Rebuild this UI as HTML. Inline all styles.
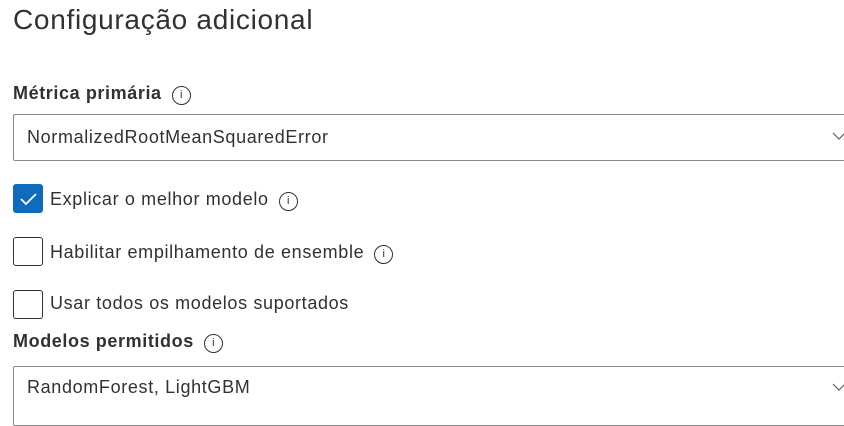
<!DOCTYPE html>
<html><head><style>
body{margin:0;width:844px;height:410px;background:#fff;font-family:"Liberation Sans",sans-serif;color:#323130;position:relative;overflow:hidden}
.a{position:absolute;white-space:nowrap}
.t{left:13px;top:4px;font-size:28px;letter-spacing:0.7px;color:#323130}
.l{font-size:18px;font-weight:bold;letter-spacing:0.6px;color:#323130}
.x{font-size:18px;letter-spacing:0.65px}
.box{position:absolute;left:13px;width:840px;height:47px;border:1px solid #8a8886;border-radius:2px;box-sizing:border-box}
.cb{position:absolute;left:13px;width:30px;height:29px;border:1px solid #323130;border-radius:3px;box-sizing:border-box}
.i{display:inline-block;width:19px;height:19px;border:1.2px solid #323130;border-radius:50%;box-sizing:border-box;font-size:11px;text-align:center;line-height:17px;font-weight:normal;letter-spacing:0;vertical-align:1px;margin-left:10px}
</style></head><body>
<div class="a t">Configuração adicional</div>
<div class="a l" style="left:13px;top:83px">Métrica primária<span class="i">i</span></div>
<div class="box" style="top:114px"></div>
<div class="a x" style="left:27px;top:127px">NormalizedRootMeanSquaredError</div>
<svg class="a" style="left:832px;top:131px" width="14" height="10"><path d="M1 2l6 6 6-6" fill="none" stroke="#605e5c" stroke-width="1.2"/></svg>
<div class="cb" style="top:184px;background:#0f6cbd;border-color:#0f6cbd"><svg width="28" height="27"><path d="M7 14l5 5 10-10" fill="none" stroke="#fff" stroke-width="1.8"/></svg></div>
<div class="a x" style="left:50px;top:189px">Explicar o melhor modelo<span class="i">i</span></div>
<div class="cb" style="top:237px"></div>
<div class="a x" style="left:50px;top:242px">Habilitar empilhamento de ensemble<span class="i">i</span></div>
<div class="cb" style="top:290px"></div>
<div class="a x" style="left:50px;top:293px">Usar todos os modelos suportados</div>
<div class="a l" style="left:13px;top:331px">Modelos permitidos<span class="i">i</span></div>
<div class="box" style="top:366px;height:60px"></div>
<div class="a x" style="left:27px;top:377px">RandomForest, LightGBM</div>
<svg class="a" style="left:832px;top:382px" width="14" height="10"><path d="M1 2l6 6 6-6" fill="none" stroke="#605e5c" stroke-width="1.2"/></svg>
</body></html>
